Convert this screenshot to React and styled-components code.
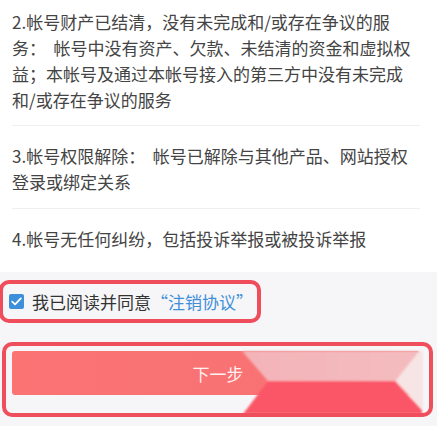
import React from "react";
import styled, { createGlobalStyle } from "styled-components";

const GlobalStyle = createGlobalStyle`
  html, body {
    margin: 0;
    padding: 0;
    background: #f6f6f8;
  }
  body {
    font-family: "Noto Sans CJK SC", "Noto Sans", sans-serif;
    -webkit-font-smoothing: antialiased;
  }
`;

const Page = styled.div`
  width: 437px;
  height: 426px;
  overflow: hidden;
  background: #f6f6f8;
`;

const Sheet = styled.div`
  background: #fff;
  padding-top: 9px;
`;

const Section = styled.div`
  margin: 0 17px 0 12px;
  padding: ${(p) => (p.$first ? "0 0 12px" : "17px 0 13px")};
  padding-bottom: ${(p) => (p.$last ? "20px" : null)};
  border-bottom: ${(p) => (p.$last ? "none" : "1px solid #efefef")};
  margin-right: ${(p) => (p.$last ? "17px" : "17px")};
`;

const Para = styled.p`
  margin: 0;
  font-size: 17px;
  line-height: 26px;
  color: #444;
  white-space: nowrap;
  letter-spacing: 0;
`;

const Footer = styled.div`
  padding-top: 8px;
`;

const AgreeFrame = styled.label`
  box-sizing: border-box;
  display: flex;
  align-items: center;
  gap: 8px;
  width: 262px;
  height: 43px;
  padding-left: 6px;
  border: 4px solid #ef4c5c;
  border-radius: 10px;
  margin-left: -1px;
`;

const Check = styled.span`
  width: 15px;
  height: 15px;
  border-radius: 2px;
  background: #3e8fdb;
  display: flex;
  align-items: center;
  justify-content: center;
  flex: none;
`;

const AgreeText = styled.span`
  font-size: 17px;
  color: #333;
  white-space: nowrap;
`;

const Link = styled.span`
  color: #3f8fd8;
`;

const ButtonFrame = styled.div`
  position: relative;
  box-sizing: border-box;
  width: 431px;
  height: 75px;
  margin: 19px 0 0 2px;
  padding: 5px 9px 18px 6px;
  border: 4px solid #ef4e5d;
  border-radius: 10px;
  overflow: hidden;
`;

const NextButton = styled.button`
  width: 100%;
  height: 44px;
  border: none;
  border-radius: 3px;
  background: linear-gradient(90deg, #fb7373, #f77274);
  color: rgba(255, 255, 255, 0.92);
  font-family: inherit;
  font-size: 17px;
  display: flex;
  align-items: center;
  justify-content: center;
  padding: 0 0 0 4px;
`;

const Glitch = styled.svg`
  position: absolute;
  left: 0;
  top: 0;
  pointer-events: none;
`;

export default function App() {
  return (
    <Page>
      <GlobalStyle />
      <Sheet>
        <Section $first>
          <Para>
            2.帐号财产已结清，没有未完成和/或存在争议的服
            <br />
            务：&nbsp; 帐号中没有资产、欠款、未结清的资金和虚拟权
            <br />
            益；本帐号及通过本帐号接入的第三方中没有未完成
            <br />
            和/或存在争议的服务
          </Para>
        </Section>
        <Section>
          <Para>
            3.帐号权限解除：&nbsp; 帐号已解除与其他产品、网站授权
            <br />
            登录或绑定关系
          </Para>
        </Section>
        <Section $last>
          <Para>4.帐号无任何纠纷，包括投诉举报或被投诉举报</Para>
        </Section>
      </Sheet>
      <Footer>
        <AgreeFrame>
          <Check>
            <svg width="11" height="9" viewBox="0 0 11 9">
              <path d="M1.2 4.6 L4.1 7.3 L9.8 1.4" fill="none" stroke="#fff" strokeWidth="1.8" strokeLinecap="round" strokeLinejoin="round" />
            </svg>
          </Check>
          <AgreeText>
            我已阅读并同意<Link>“注销协议”</Link>
          </AgreeText>
        </AgreeFrame>
        <ButtonFrame>
          <NextButton>下一步</NextButton>
          <Glitch width="423" height="67" viewBox="0 0 423 67">
            <defs>
              <linearGradient id="pinkTop" x1="0" x2="1" y1="0" y2="0">
                <stop offset="0" stopColor="#f3b4b8" />
                <stop offset="1" stopColor="#f4bcbf" />
              </linearGradient>
              <filter id="soft" x="-5%" y="-5%" width="110%" height="110%">
                <feGaussianBlur stdDeviation="0.8" />
              </filter>
            </defs>
            <g filter="url(#soft)">
              <polygon points="236,5 413,5 389,35 262,35" fill="url(#pinkTop)" />
              <polygon points="413,5 417,5 417,64 389,35" fill="#f7e4e4" />
              <polygon points="262,35 389,35 416,64 416,68 237,68" fill="#fb5668" />
            </g>
          </Glitch>
        </ButtonFrame>
      </Footer>
    </Page>
  );
}
